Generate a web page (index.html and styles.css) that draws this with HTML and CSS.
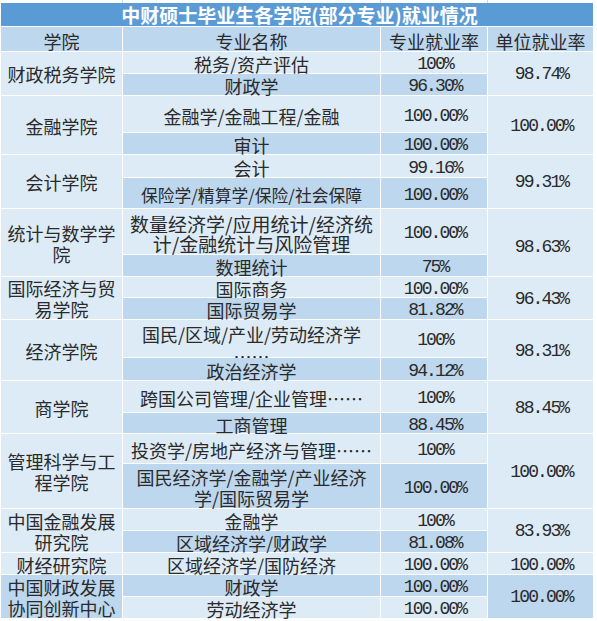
FILE: index.html
```html
<!DOCTYPE html>
<html lang="zh-CN">
<head>
<meta charset="utf-8">
<title>中财硕士毕业生各学院(部分专业)就业情况</title>
<link rel="stylesheet" href="styles.css">
</head>
<body>
<div class="sheet">
  <div class="topline"><span></span><span></span><span></span><span></span></div>
  <div class="grid">
    <div class="title">中财硕士毕业生各学院(部分专业)就业情况</div>

    <div class="c dk">学院</div>
    <div class="c dk">专业名称</div>
    <div class="c dk">专业就业率</div>
    <div class="c dk">单位就业率</div>

    <div class="c lt r2 m">财政税务学院</div>
    <div class="c lt">税务/资产评估</div>
    <div class="c lt num">100%</div>
    <div class="c lt num r2 m">98.74%</div>
    <div class="c dk">财政学</div>
    <div class="c dk num">96.30%</div>

    <div class="c lt r2 m">金融学院</div>
    <div class="c lt">金融学/金融工程/金融</div>
    <div class="c lt num">100.00%</div>
    <div class="c lt num r2 m">100.00%</div>
    <div class="c dk">审计</div>
    <div class="c dk num">100.00%</div>

    <div class="c lt r2 m">会计学院</div>
    <div class="c lt">会计</div>
    <div class="c lt num">99.16%</div>
    <div class="c lt num r2 m">99.31%</div>
    <div class="c dk small">保险学/精算学/保险/社会保障</div>
    <div class="c dk num">100.00%</div>

    <div class="c lt r2 m">统计与数学学<br>院</div>
    <div class="c lt big">数量经济学/应用统计/经济统<br>计/金融统计与风险管理</div>
    <div class="c lt num">100.00%</div>
    <div class="c lt num r2 m low">98.63%</div>
    <div class="c dk">数理统计</div>
    <div class="c dk num">75%</div>

    <div class="c lt r2 m">国际经济与贸<br>易学院</div>
    <div class="c lt">国际商务</div>
    <div class="c lt num">100.00%</div>
    <div class="c lt num r2 m">96.43%</div>
    <div class="c dk">国际贸易学</div>
    <div class="c dk num">81.82%</div>

    <div class="c lt r2 m">经济学院</div>
    <div class="c lt top">国民/区域/产业/劳动经济学<br>……</div>
    <div class="c lt num">100%</div>
    <div class="c lt num r2 m">98.31%</div>
    <div class="c dk">政治经济学</div>
    <div class="c dk num">94.12%</div>

    <div class="c lt r2 m">商学院</div>
    <div class="c lt">跨国公司管理/企业管理……</div>
    <div class="c lt num">100%</div>
    <div class="c lt num r2 m">88.45%</div>
    <div class="c dk">工商管理</div>
    <div class="c dk num">88.45%</div>

    <div class="c lt r2 m">管理科学与工<br>程学院</div>
    <div class="c lt">投资学/房地产经济与管理……</div>
    <div class="c lt num">100%</div>
    <div class="c lt num r2 m">100.00%</div>
    <div class="c dk">国民经济学/金融学/产业经济<br>学/国际贸易学</div>
    <div class="c dk num">100.00%</div>

    <div class="c lt r2 m">中国金融发展<br>研究院</div>
    <div class="c lt">金融学</div>
    <div class="c lt num">100%</div>
    <div class="c lt num r2 m">83.93%</div>
    <div class="c dk">区域经济学/财政学</div>
    <div class="c dk num">81.08%</div>

    <div class="c lt">财经研究院</div>
    <div class="c lt">区域经济学/国防经济</div>
    <div class="c lt num">100.00%</div>
    <div class="c lt num">100.00%</div>

    <div class="c dk r2 m">中国财政发展<br>协同创新中心</div>
    <div class="c dk">财政学</div>
    <div class="c dk num">100.00%</div>
    <div class="c dk num r2 m">100.00%</div>
    <div class="c lt">劳动经济学</div>
    <div class="c lt num">100.00%</div>
  </div>
</div>
</body>
</html>
```

FILE: styles.css
```css
html, body {
  margin: 0;
  padding: 0;
  background: #ffffff;
}

.sheet {
  width: 597px;
  height: 621px;
  padding-left: 1px;
  box-sizing: border-box;
  overflow: hidden;
}

.topline {
  display: grid;
  grid-template-columns: 121px 257px 106px 105px;
  column-gap: 1px;
  width: 592px;
  height: 3px;
  background: #d6d6d6;
}

.topline span {
  background: #ffffff;
}

.grid {
  display: grid;
  grid-template-columns: 121px 257px 106px 105px;
  grid-template-rows: 23px 24px 21px 21px 36px 21px 22px 30px 45px 21px 20px 21px 37px 22px 31px 20px 29px 44px 21px 21px 21px 21px 21px;
  gap: 1px;
  width: 592px;
  background: #ffffff;
  font-family: "Noto Sans CJK SC", "Noto Sans", sans-serif;
  color: #2a2a2a;
}

.title {
  grid-column: 1 / 5;
  background: #5b9bd5;
  color: #ffffff;
  font-weight: 700;
  font-size: 19px;
  line-height: 23px;
  text-align: center;
  padding-left: 5px;
  white-space: nowrap;
}

.c {
  display: flex;
  align-items: center;
  justify-content: center;
  text-align: center;
  white-space: nowrap;
  font-size: 18px;
  line-height: 21px;
  padding-top: 4px;
  box-sizing: border-box;
  overflow: visible;
}

.lt {
  background: #ddebf7;
}

.dk {
  background: #bdd7ee;
}

.r2 {
  grid-row: span 2;
}

.m {
  padding-top: 2px;
}

.low {
  padding-top: 10px;
}

.small {
  font-size: 16.8px;
}

.big {
  font-size: 19px;
  line-height: 20px;
}

.top {
  align-items: flex-start;
  padding-top: 3px;
  line-height: 22px;
}

.num {
  font-family: "Liberation Mono", "DejaVu Sans Mono", monospace;
  font-size: 18px;
  letter-spacing: -1.9px;
  padding-left: 2px;
}
```
